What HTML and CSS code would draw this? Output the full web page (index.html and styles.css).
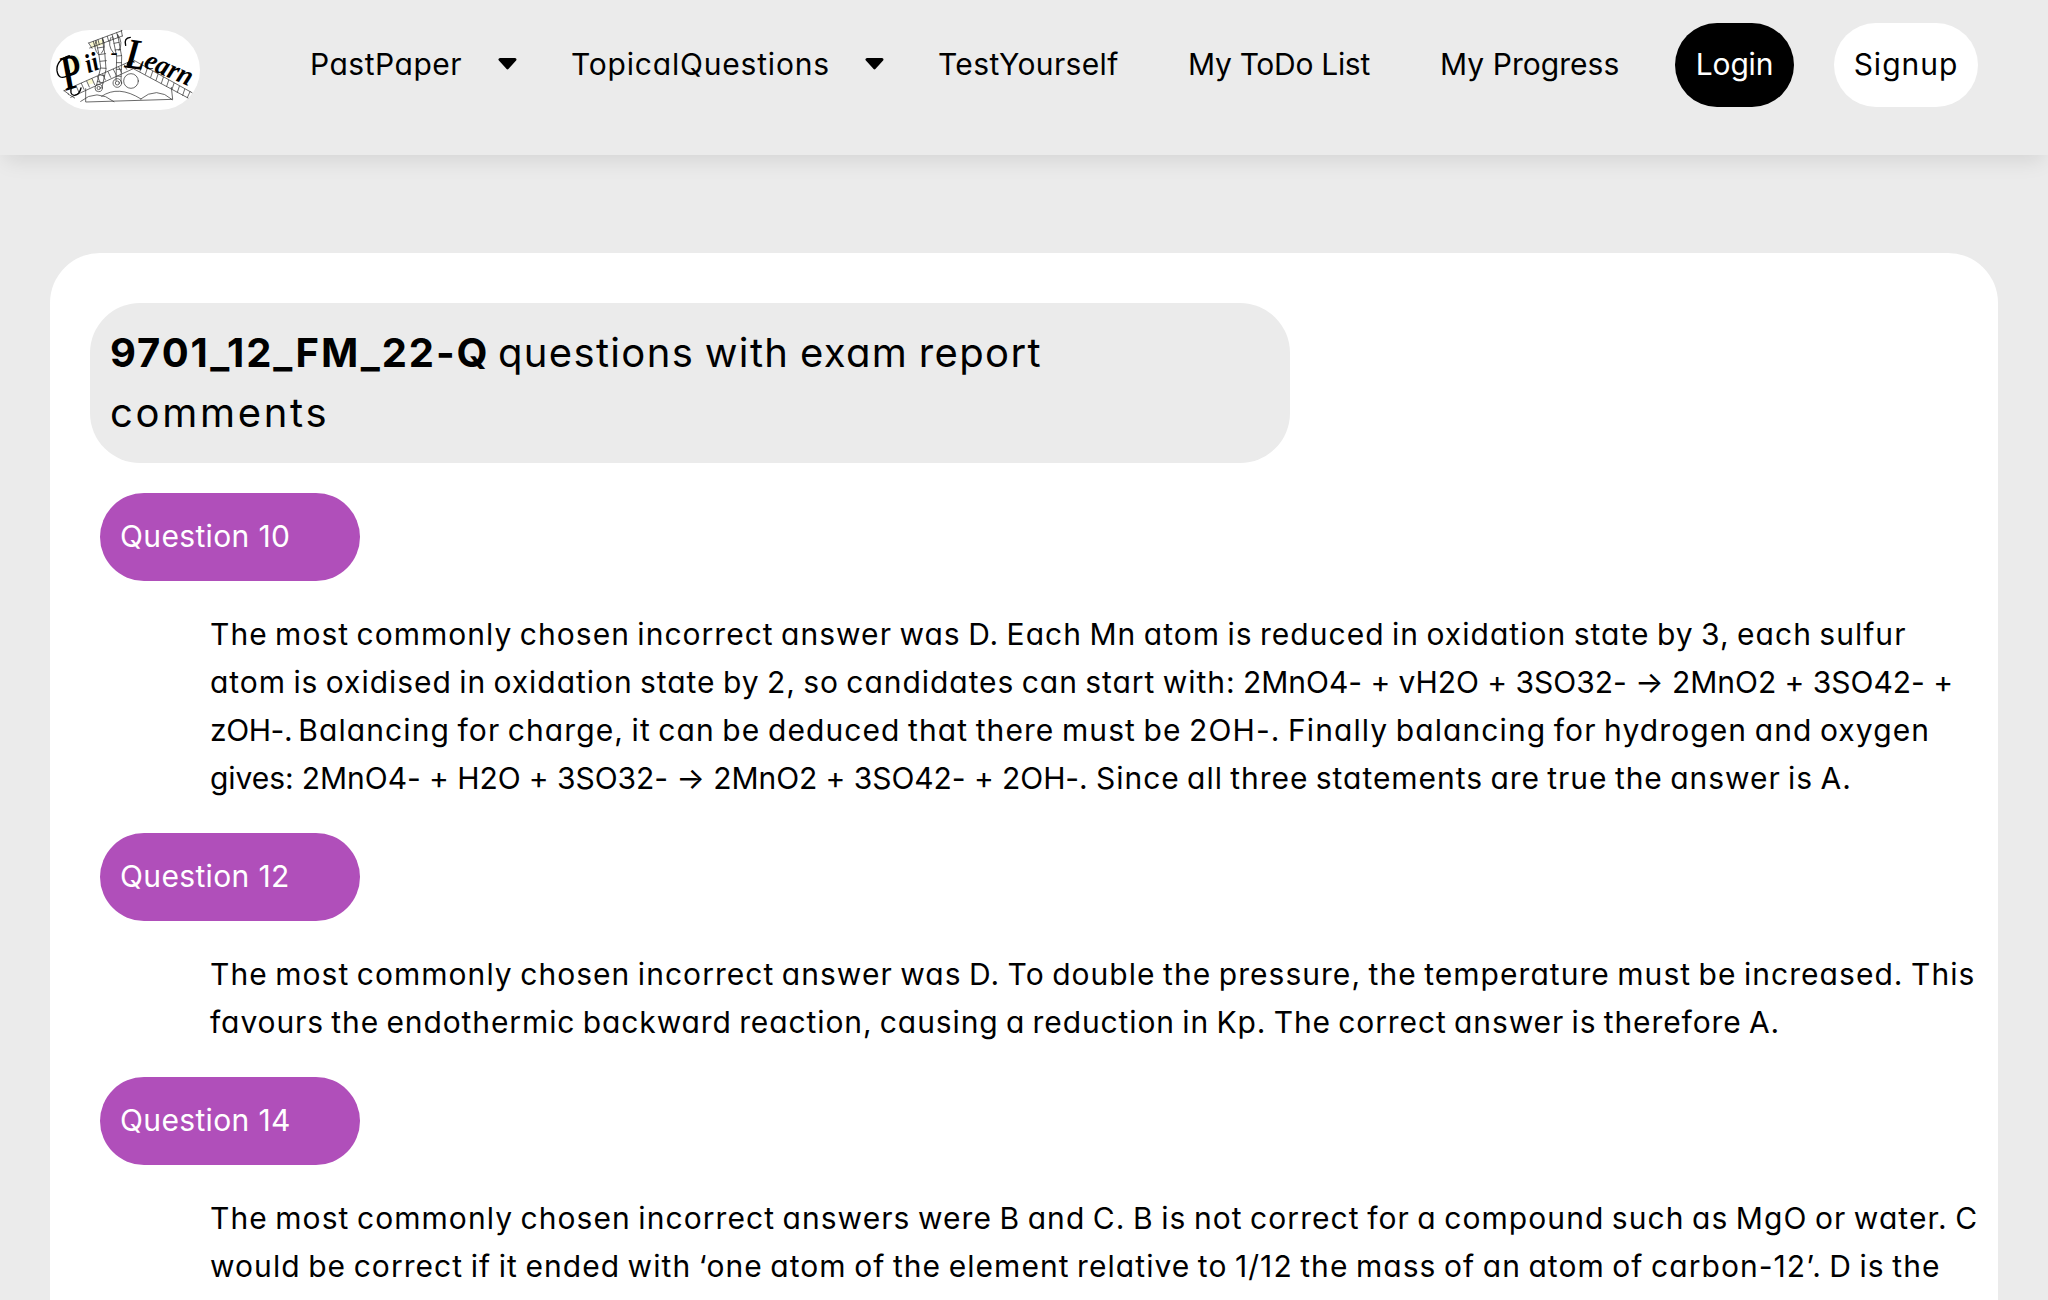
FILE: index.html
```
<!DOCTYPE html>
<html lang="en">
<head>
<meta charset="utf-8">
<title>Pii-Learn</title>
<link rel="stylesheet" href="styles.css">
</head>
<body>
<header class="topbar">
  <a class="logo">
    <svg viewBox="30 30 450 240" width="150" height="80" fill="none" stroke="#333" stroke-width="2.2" stroke-linecap="round">
      <g class="highlight"><ellipse cx="104" cy="132" rx="19" ry="26"/><path d="M150 68l38-10 2 16-36 10zM142 180l16-4 2 14-14 4z"/></g>
      <!-- roof and hills -->
      <path d="M72 212l208-92 176 98M92 232l188-86 164 88M72 212l14 10M84 222l20 12M137 206v40l261-8-4-36"/>
      <path d="M108 197l8 18M124 190l8 18M140 183l8 18M156 176l8 18M172 169l8 18M188 162l8 18M204 155l8 17M220 148l8 16M236 141l8 16M252 134l8 14M306 136l-6 18M322 145l-6 18M338 154l-6 18M354 163l-6 18M370 172l-6 18M386 181l-6 18M402 190l-6 18M418 199l-6 18M434 208l-6 18M450 215l-8 18"/>
      <path d="M122 244q48-40 100 1M185 229q50-35 118 8M302 237q48-40 95 2"/>
      <circle cx="273" cy="183" r="22"/>
      <!-- beamed notes made of track -->
      <path d="M146 69l100-37M149 84l98-36M146 69l10 16M160 64l4 15M174 59l4 15M188 54l4 15M202 49l4 15M216 43l4 15M230 38l4 15M244 31l3 17"/>
      <path d="M168 62q10 40 14 80l-12 52M187 56q10 50 11 92l-12 54M173 84l19-3M177 104l20-3M180 124l19-2M181 144l17 1M177 164l17 4M172 184l17 5"/>
      <path d="M218 50l12 60-2 72M233 44l12 66-2 76M222 70l15-3M225 90l17-2M229 108l16-1M230 128l14 0M230 148l14 0M228 168l15 1"/>
      <path d="M168 62q-10 24 8 42M233 44q18 24 4 48M187 56q14 24-3 44M213 52q-12 24 7 46"/>
      <circle cx="176" cy="204" r="11"/><circle cx="176" cy="204" r="5"/><circle cx="232" cy="189" r="13"/><circle cx="232" cy="189" r="6"/>
      <!-- flourishes round the capitals -->
      <path class="swash" d="M88 107q-40 14-37 45 4 28 28 17 15-9 5-23M95 200q-8 24 8 26 16-2 20-22M257 76q-6-22 14-24M262 134q4-16 20-8"/>
      <g class="wordmark">
        <text font-size="150" transform="translate(78 212) rotate(-17) scale(.66 1)">P</text>
        <text font-size="80" transform="translate(145 160) rotate(-20) scale(.9 1)">ii</text>
        <text font-size="62" x="212" y="116">-</text>
        <text font-size="130" transform="translate(252 142) rotate(8) scale(.76 1)">L</text>
        <text font-size="84" transform="translate(308 140) rotate(23)" textLength="150" lengthAdjust="spacingAndGlyphs">earn</text>
      </g>
    </svg>
  </a>
  <nav class="menu">
    <a class="item past"><span>PastPaper</span><svg class="caret" viewBox="0 0 19 12"><path d="M2 1.5h15L9.5 9.8z"/></svg></a>
    <a class="item topical"><span>TopicalQuestions</span><svg class="caret" viewBox="0 0 19 12"><path d="M2 1.5h15L9.5 9.8z"/></svg></a>
    <a class="item test">TestYourself</a>
    <a class="item todo">My ToDo List</a>
    <a class="item progress">My Progress</a>
  </nav>
  <div class="account">
    <a class="button login">Login</a>
    <a class="button signup">Signup</a>
  </div>
</header>

<main class="card">
  <h1 class="title"><b>9701_12_FM_22-Q</b> <span>questions with exam report</span><br><span class="last">comments</span></h1>

  <section class="question">
    <h2 class="pill">Question 10</h2>
    <p class="comment">
      <span class="line">The most commonly chosen incorrect answer was D. Each Mn atom is reduced in oxidation state by 3, each sulfur</span>
      <span class="line"><span class="snug">atom is oxidised in oxidation state by 2, so candidates can start with: </span><span class="formula">2MnO4- + vH2O + 3SO32- → 2MnO2 + 3SO42- +</span></span>
      <span class="line"><span class="ion">zOH-. </span><span class="loose">Balancing for charge, it can be deduced that there must be 2OH-. Finally balancing for hydrogen and oxygen</span></span>
      <span class="line"><span class="formula tight">gives: 2MnO4- + H2O + 3SO32- → 2MnO2 + 3SO42- + 2OH-. </span><span class="snug">Since all three statements are true the answer is A.</span></span>
    </p>
  </section>

  <section class="question">
    <h2 class="pill">Question 12</h2>
    <p class="comment">
      <span class="line wide">The most commonly chosen incorrect answer was D. To double the pressure, the temperature must be increased. This</span>
      <span class="line narrow">favours the endothermic backward reaction, causing a reduction in Kp. The correct answer is therefore A.</span>
    </p>
  </section>

  <section class="question">
    <h2 class="pill">Question 14</h2>
    <p class="comment">
      <span class="line mass">The most commonly chosen incorrect answers were B and C. B is not correct for a compound such as MgO or water. C</span>
      <span class="line mass">would be correct if it ended with ‘one atom of the element relative to 1/12 the mass of an atom of carbon-12’. D is the</span>
    </p>
  </section>
</main>
</body>
</html>
```
FILE: styles.css
```
* { box-sizing: border-box; }

html, body { height: 100%; }

body {
  margin: 0;
  overflow: hidden;
  background: #ebebeb;
  color: #000;
  font: 30px/48px Inter, sans-serif;
  font-feature-settings: "cv11";
}

.topbar {
  display: flex;
  align-items: flex-start;
  height: 155px;
  padding: 23px 50px 0;
  background: #ebebeb;
  box-shadow: 0 10px 20px -5px rgba(0, 0, 0, 0.1);
}

.logo {
  width: 150px;
  height: 80px;
  margin: 7px 110px 0 0;
  border-radius: 40px;
  background: #fff;
}

.logo svg { display: block; overflow: visible; }
.highlight { fill: #fbf9cf; stroke: none; }
.swash { stroke: #000; stroke-width: 4; }

.wordmark {
  fill: #000;
  stroke: none;
  font-family: "Liberation Serif", serif;
  font-style: italic;
  font-weight: 700;
}

.menu {
  display: flex;
  gap: 54px;
  height: 82px;
  align-items: center;
  white-space: nowrap;
}

.item {
  display: flex;
  align-items: center;
  justify-content: space-between;
}

.past { width: 207px; letter-spacing: 0.5px; }
.topical { width: 313px; letter-spacing: 0.8px; }
.test { width: 196px; letter-spacing: 0.35px; }
.todo { width: 198px; letter-spacing: -0.3px; }
.progress { width: 181px; letter-spacing: 0.05px; }

.caret {
  width: 19px;
  height: 12px;
  stroke: #000;
  stroke-width: 3;
  stroke-linejoin: round;
}

.account {
  display: flex;
  gap: 40px;
  margin-left: 54px;
}

.button {
  height: 84px;
  border-radius: 42px;
  line-height: 82px;
  text-align: center;
}

.login { width: 119px; background: #000; color: #fff; letter-spacing: -0.2px; }
.signup { width: 144px; background: #fff; letter-spacing: 1px; }

.card {
  height: 1100px;
  margin: 98px 50px 0;
  padding: 50px 20px 0 40px;
  border-radius: 50px 50px 0 0;
  background: #fff;
}

.title {
  width: 1200px;
  margin: 0 0 30px;
  padding: 20px;
  border-radius: 50px;
  background: #ebebeb;
  font-size: 40px;
  font-weight: 400;
  line-height: 60px;
  letter-spacing: 1.15px;
  word-spacing: -4px;
  white-space: nowrap;
}

.title b { letter-spacing: 1.9px; }
.title span { word-spacing: -2px; letter-spacing: 1.35px; }
.title .last { letter-spacing: 2.7px; }

.pill {
  width: 260px;
  height: 88px;
  margin: 0 0 29px 10px;
  padding: 19px 20px;
  border-radius: 44px;
  background: #b04fba;
  color: #fff;
  font-size: 30px;
  font-weight: 400;
  line-height: 48px;
  letter-spacing: 0.35px;
}

.comment {
  margin: 0 0 31px 120px;
  letter-spacing: 1.02px;
  word-spacing: -2px;
  white-space: nowrap;
}

.line { display: block; }
.snug { letter-spacing: 0.96px; white-space: pre; }
.narrow { letter-spacing: 0.9px; }
.wide { letter-spacing: 1.04px; }
.mass { letter-spacing: 1.06px; }
.loose { letter-spacing: 1.09px; }
.ion { letter-spacing: -0.4px; white-space: pre; }
.formula { letter-spacing: -0.04px; word-spacing: 0; white-space: pre; }
.tight { letter-spacing: -0.07px; }
```
